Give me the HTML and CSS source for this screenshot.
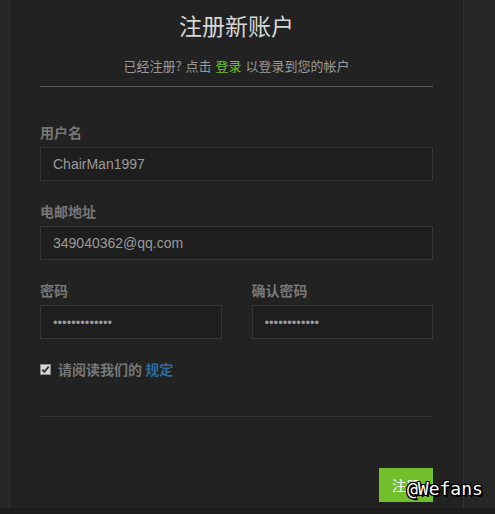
FILE: index.html
```html
<!DOCTYPE html>
<html lang="zh-CN">
<head>
<meta charset="utf-8">
<title>注册新账户</title>
<link rel="stylesheet" href="styles.css">
</head>
<body>
<div class="page">
  <div class="panel">
    <h1 class="title">注册新账户</h1>
    <p class="subtitle">已经注册? 点击 <a class="green" href="#">登录</a> 以登录到您的帐户</p>
    <hr class="rule">
    <form class="form">
      <div class="field">
        <label class="label">用户名</label>
        <input class="input" type="text" value="ChairMan1997">
      </div>
      <div class="field">
        <label class="label">电邮地址</label>
        <input class="input" type="text" value="349040362@qq.com">
      </div>
      <div class="row">
        <div class="field">
          <label class="label">密码</label>
          <input class="input" type="password" value="abcdefghijklm">
        </div>
        <div class="field">
          <label class="label">确认密码</label>
          <input class="input" type="password" value="abcdefghijkl">
        </div>
      </div>
      <div class="agree">
        <span class="check"><svg width="11" height="11" viewBox="0 0 11 11"><rect x="0.5" y="0.5" width="10" height="10" fill="#d8d8d8" stroke="#8a8a8a"/><path d="M2.3 5.6 L4.4 7.9 L8.7 2.6" fill="none" stroke="#333" stroke-width="1.8"/></svg></span>
        <span class="agree-text">请阅读我们的 <a class="blue" href="#">规定</a></span>
      </div>
      <hr class="rule rule-dark">
      <div class="actions">
        <button class="btn" type="button">注册</button>
      </div>
    </form>
    <div class="watermark">@Wefans</div>
  </div>
</div>
</body>
</html>
```

FILE: styles.css
```css
* { box-sizing: border-box; }
html, body { margin: 0; padding: 0; }
body {
  background: #1c1c1c;
  font-family: "Liberation Sans", "Noto Sans CJK SC", sans-serif;
  width: 495px;
  height: 514px;
  overflow: hidden;
}
.page {
  background: #262626;
  height: 508px;
  padding-left: 9px;
}
.panel {
  position: relative;
  width: 455px;
  height: 508px;
  background: #222222;
  border-left: 1px solid #303030;
  border-right: 1px solid #303030;
  padding: 10px 30px 0 30px;
}
.title {
  margin: 0;
  font-family: "Noto Sans CJK SC", sans-serif;
  font-weight: 400;
  font-size: 23px;
  line-height: 30px;
  color: #d6d6d6;
  text-align: center;
}
.subtitle {
  margin: 16px 0 0;
  font-family: "Noto Sans CJK SC", sans-serif;
  font-size: 13px;
  line-height: 20px;
  color: #9a9a9a;
  text-align: center;
  word-spacing: 1px;
}
.green { color: #74c12c; text-decoration: none; }
.blue { color: #2d6a9f; text-decoration: none; }
.rule {
  margin: 10px 0 0;
  border: 0;
  height: 1px;
  background: #5a5a5a;
}
.form {
  margin-top: 35px;
  display: flex;
  flex-direction: column;
  gap: 20px;
}
.field {
  display: flex;
  flex-direction: column;
  gap: 5px;
}
.label {
  font-family: "Noto Sans CJK SC", sans-serif;
  font-weight: 700;
  font-size: 14px;
  line-height: 20px;
  color: #777777;
}
.input {
  height: 34px;
  width: 100%;
  margin: 0;
  background: #1e1e1e;
  border: 1px solid #363636;
  padding: 0 12px;
  font-family: "Liberation Sans", sans-serif;
  font-size: 14px;
  color: #9a9a9a;
  outline: none;
}
.input[type="password"] {
  font-size: 13px;
}
.row {
  display: grid;
  grid-template-columns: 1fr 1fr;
  column-gap: 30px;
}
.agree {
  display: flex;
  align-items: center;
  gap: 7px;
  height: 20px;
}
.check { display: flex; width: 11px; height: 11px; }
.agree-text {
  font-family: "Noto Sans CJK SC", sans-serif;
  font-weight: 700;
  font-size: 14px;
  line-height: 20px;
  color: #777777;
}
.rule-dark {
  margin: 17px 0 0;
  background: #333333;
}
.actions {
  display: flex;
  justify-content: flex-end;
  margin-top: 31px;
}
.btn {
  height: 34px;
  padding: 0 13px;
  border: 0;
  background: #70bf2b;
  color: #ffffff;
  font-family: "Noto Sans CJK SC", sans-serif;
  font-size: 14px;
  line-height: 34px;
}
.watermark {
  position: absolute;
  left: 397px;
  top: 478px;
  font-family: "DejaVu Sans Mono", monospace;
  font-weight: 400;
  font-size: 18px;
  line-height: 21px;
  color: #ffffff;
  text-shadow: 1px 0 #000, -1px 0 #000, 0 1px #000, 0 -1px #000, 1px 1px #000, -1px -1px #000, 1px -1px #000, -1px 1px #000, 2px 2px #000;
}
```
